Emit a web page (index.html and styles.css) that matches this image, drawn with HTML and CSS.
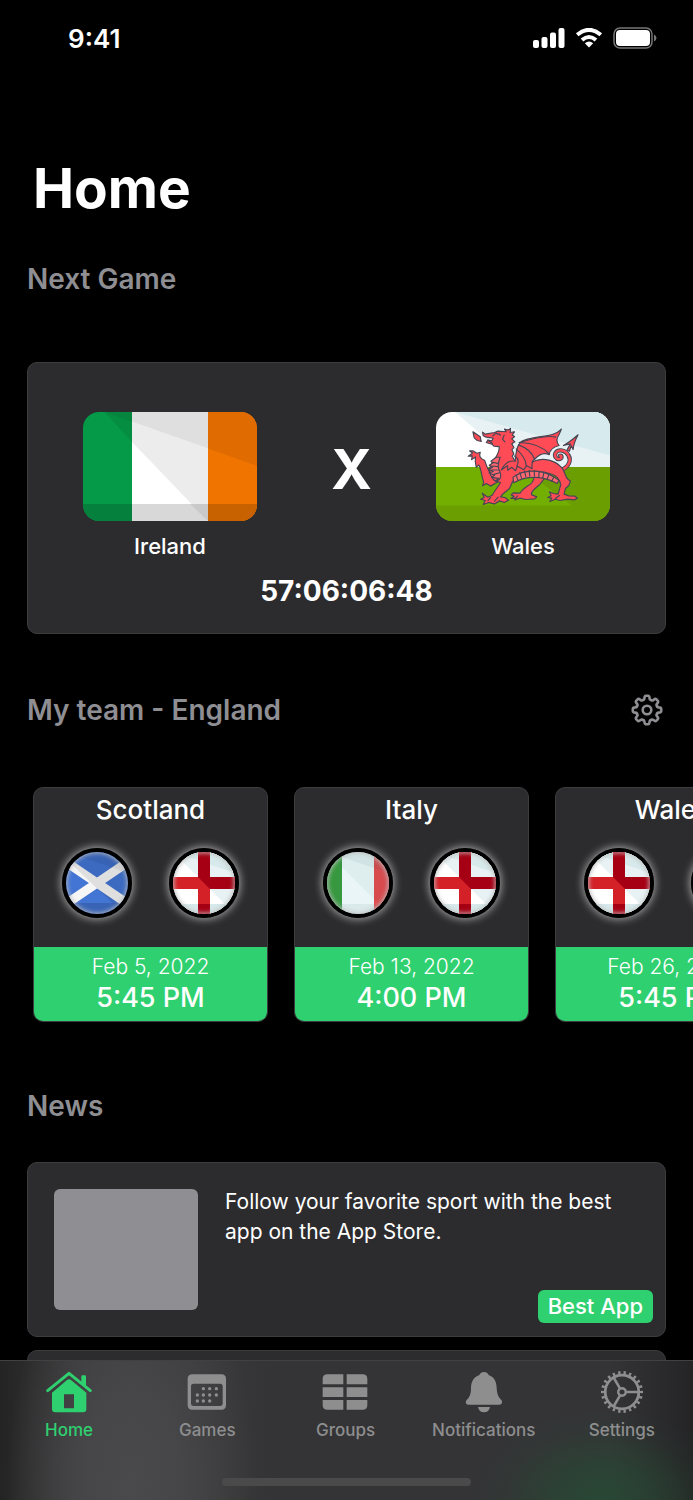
FILE: index.html
```html
<!DOCTYPE html>
<html lang="en">
<head>
<meta charset="utf-8">
<meta name="viewport" content="width=device-width, initial-scale=1">
<title>Home</title>
<link rel="stylesheet" href="styles.css">
</head>
<body>
<svg class="defs" aria-hidden="true">
  <symbol id="flag-england" viewBox="-31 -31 62 62">
    <rect x="-31" y="-31" width="62" height="62" fill="#fff"/>
    <path d="M-31-31L31 31V-31Z" fill="#e8f2f4"/>
    <path d="M-31-31L31-10V-31Z" fill="#d7e9eb"/>
    <path d="M-31 21H31V31H-31Z" fill="#d7e9eb"/>
    <path d="M-6-31H6V-6H31V6H6V31H-6V6H-31V-6H-6Z" fill="#d42027"/>
    <path d="M-6-31H6V-6H31V6H6L-6-6Z" fill="#a50014"/>
    <path d="M-6 21H6V31H-6Z" fill="#a50014"/>
  </symbol>
  <symbol id="flag-scotland" viewBox="-31 -31 62 62">
    <rect x="-31" y="-31" width="62" height="62" fill="#4375d4"/>
    <path d="M-34-23L34 23M-34 23L34-23" stroke="#f6f6f6" stroke-width="9"/>
    <path d="M-31-24L31 35V-31H-31Z" opacity=".09"/>
    <path d="M-31-31L31-10V-31Z" opacity=".06"/>
    <path d="M-31 20H31V31H-31Z" opacity=".14"/>
  </symbol>
  <symbol id="flag-italy" viewBox="-31 -31 62 62">
    <rect x="-31" y="-31" width="62" height="62" fill="#e9f5f6"/>
    <path d="M-31-31H-16V31H-31Z" fill="#37983f"/>
    <path d="M16-31H31V31H16Z" fill="#e24a4e"/>
    <path d="M-31-31L31 31V-31Z" fill="#1b5a5a" opacity=".05"/>
    <path d="M-31-31L31-10V-31Z" fill="#1b5a5a" opacity=".07"/>
    <path d="M-31 21H31V31H-31Z" fill="#1b5a5a" opacity=".07"/>
  </symbol>
</svg>

<div class="screen">
  <header class="status">
    <time class="status-time">9:41</time>
    <div class="status-icons">
      <svg width="32" height="20" viewBox="0 0 32 20" fill="#fff" aria-label="Signal"><rect x="0" y="12" width="6" height="8" rx="2"/><rect x="8.500" y="9" width="6" height="11" rx="2"/><rect x="17" y="4.500" width="6" height="15.500" rx="2"/><rect x="25.500" y="0" width="6" height="20" rx="2"/></svg>
      <svg width="28" height="20" viewBox="0 0 28 20" fill="none" stroke="#fff" stroke-width="4" aria-label="Wi-Fi"><path d="M2.200 6.700Q14-3 25.800 6.700"/><path d="M7 12Q14 6 21 12"/><path d="M9.800 15.300Q14 11.800 18.200 15.300L14 19.500Z" fill="#fff" stroke="none"/></svg>
      <svg width="44" height="22" viewBox="0 0 44 22" aria-label="Battery"><rect x="1" y="1" width="38" height="20" rx="6" fill="none" stroke="#777" stroke-width="1.500"/><rect x="3" y="3" width="34" height="16" rx="4" fill="#fff"/><path d="M41 7.500Q43.500 8.500 43.500 11T41 14.500Z" fill="#777"/></svg>
    </div>
  </header>

  <main class="content">
    <h1 class="title">Home</h1>

    <section>
      <h2 class="heading">Next Game</h2>
      <div class="card next-game">
        <div class="match">
          <figure class="team">
            <svg class="team-flag" viewBox="40 37 522 326" preserveAspectRatio="none" aria-label="Flag of Ireland">
              <path d="M40 37H187V363H40Z" fill="#049a48"/>
              <path d="M187 37H415V363H187Z" fill="#fff"/>
              <path d="M415 37H562V363H415Z" fill="#f07400"/>
              <path d="M105 37L187 127V37Z" fill="#058d42"/>
              <path d="M187 66L415 146V363L187 127Z" fill="#ececec"/>
              <path d="M105 37H187V66Z" fill="#05853e"/>
              <path d="M187 37H415V146L187 66Z" fill="#dfdfdf"/>
              <path d="M415 37H562V198L415 146Z" fill="#e06b00"/>
              <path d="M40 312H187V363H40Z" fill="#05803d"/>
              <path d="M187 312H415V363H187Z" fill="#d8d8d8"/>
              <path d="M362 312H415V363Z" fill="#c9c9c9"/>
              <path d="M415 312H562V363H415Z" fill="#c86100"/>
            </svg>
            <figcaption>Ireland</figcaption>
          </figure>
          <span class="versus">X</span>
          <figure class="team">
            <svg class="team-flag" viewBox="48 37 523 325" preserveAspectRatio="none" aria-label="Flag of Wales">
              <path d="M48 37H571V202H48Z" fill="#fff"/>
              <path d="M105 37L300 202H571V37Z" fill="#e8f2f5"/>
              <path d="M105 37L571 167V37Z" fill="#d7eaed"/>
              <path d="M48 201H571V362H48Z" fill="#73af00"/>
              <path d="M300 201L456 316H48V362H571V201Z" fill="#6b9e00"/>
              <g fill="none" stroke-linecap="round">
                <path d="M424 210C446 202 456 182 446 166C438 150 416 147 408 158C402 168 410 180 420 177C428 174 426 167 421 167" stroke="#464655" stroke-width="13"/>
                <path d="M424 210C446 202 456 182 446 166C438 150 416 147 408 158C402 168 410 180 420 177C428 174 426 167 421 167" stroke="#ff4b55" stroke-width="7"/>
              </g>
              <g fill="#ff4b55" stroke="#464655" stroke-width="3.500" stroke-linejoin="round" stroke-linecap="round">
                <path d="M442 150L452 132L431 137Q450 127 475 105Q462 129 460 149L454 137Q452 145 449 154Z"/>
                <path d="M348 222C338 236 344 242 332 252C318 262 306 268 301 279L280 278L274 284L283 288L273 295L286 294L285 299L300 294L318 298L345 296L351 290L336 284C330 277 347 264 360 253C370 243 374 234 378 226Z"/>
                <path d="M194 181C180 176 177 168 181 157L171 160L160 153L149 153L158 159L145 169L157 168L155 179L167 171L166 184L169 202L176 195C183 201 184 222 191 246L188 257L199 250L212 258L238 243L221 232C207 222 208 211 202 202Z"/>
                <path d="M188 97L196 103L224 98L234 94L259 96L254 88Q267 93 272 86L271 98L284 96L277 105L284 111L276 117L285 126L276 132L282 143L276 149L282 162L277 169L286 184C304 202 324 194 344 183C371 172 406 181 425 202C439 216 433 229 446 239L452 243L447 256L437 265L433 282L447 287L466 288L473 294L464 299L444 297L421 301L407 297L390 304L396 294L384 292L394 287L389 275L401 280L415 282L423 254C420 238 410 226 394 222C360 209 322 213 294 229C278 237 276 250 269 265L248 282L242 290L255 292L266 300L253 307L239 302L224 311L207 307L190 313L196 301L182 297L193 292L187 279L204 291L217 285C225 272 232 262 242 248L222 240C203 219 207 198 223 179C233 165 239 151 238 140L222 139L216 133L199 128L204 121L216 123L220 115L199 112L190 108Z"/>
                <path d="M159 96L181 111L184 125L172 122L163 114Z"/>
                <path d="M286 184C288 155 292 127 314 121C357 105 399 115 425 88L418 104Q405 122 418 137Q392 143 388 164Q365 154 344 179Q334 181 337 206L321 197L312 209L293 199L287 212L276 202L264 211L263 197L244 210C256 188 268 180 286 184Z"/>
                <path d="M298 128Q377 104 408 112M301 128Q360 130 389 163M296 135Q333 148 344 177M289 147Q319 174 319 197M284 168Q302 178 291 199" fill="none"/>
                <path d="M229 172L213 184L219 189L208 196L218 202L206 207L220 214L207 219L224 225L216 232L236 235L226 243Q251 239 238 211Q231 196 241 172Z" fill="#ff6870"/>
                <path d="M279 232C323 199 385 214 417 241L412 250C372 229 324 224 282 248Z" fill="#ff6870"/>
                <path d="M289 225L294 240M300 217L305 234M314 213L318 230M328 211L330 228M343 211L344 228M358 214L357 231M372 218L369 234M387 224L382 238M402 232L395 244M219 187L234 190M216 198L234 200M216 210L235 210M222 223L239 218" fill="none"/>
                <path d="M219 108L228 100L242 106M231 102L239 103M204 121L218 131M253 106L248 118L255 126M212 292L204 301M235 291L224 303M293 287L287 295M419 286L407 295" fill="none"/>
              </g>
            </svg>
            <figcaption>Wales</figcaption>
          </figure>
        </div>
        <p class="countdown">57:06:06:48</p>
      </div>
    </section>

    <section class="my-team">
      <div class="heading-row">
        <h2 class="heading">My team - England</h2>
        <button class="icon-button" type="button" aria-label="Team settings">
          <svg width="32" height="32" viewBox="-16 -16 32 32" fill="none" stroke="#8e8e93" stroke-width="2.600" stroke-linecap="round" stroke-linejoin="round">
            <circle r="4.300"/>
            <path id="tooth" d="M-4.130-9.980Q-2.800-9.800-2.600-11.700Q-2.400-14.200-1.200-14.200H1.200Q2.400-14.200 2.600-11.700Q2.800-9.800 4.130-9.980"/>
            <use href="#tooth" transform="rotate(45)"/><use href="#tooth" transform="rotate(90)"/><use href="#tooth" transform="rotate(135)"/><use href="#tooth" transform="rotate(180)"/><use href="#tooth" transform="rotate(225)"/><use href="#tooth" transform="rotate(270)"/><use href="#tooth" transform="rotate(315)"/>
          </svg>
        </button>
      </div>
      <div class="games">
        <article class="card game">
          <h3 class="game-name">Scotland</h3>
          <div class="game-flags">
            <span class="badge-flag"><svg><use href="#flag-scotland"/></svg></span>
            <span class="badge-flag"><svg><use href="#flag-england"/></svg></span>
          </div>
          <div class="game-when"><span class="game-date">Feb 5, 2022</span><span class="game-time">5:45 PM</span></div>
        </article>
        <article class="card game">
          <h3 class="game-name">Italy</h3>
          <div class="game-flags">
            <span class="badge-flag"><svg><use href="#flag-italy"/></svg></span>
            <span class="badge-flag"><svg><use href="#flag-england"/></svg></span>
          </div>
          <div class="game-when"><span class="game-date">Feb 13, 2022</span><span class="game-time">4:00 PM</span></div>
        </article>
        <article class="card game">
          <h3 class="game-name">Wales</h3>
          <div class="game-flags">
            <span class="badge-flag"><svg><use href="#flag-england"/></svg></span>
            <span class="badge-flag"></span>
          </div>
          <div class="game-when"><span class="game-date">Feb 26, 2022</span><span class="game-time">5:45 PM</span></div>
        </article>
      </div>
    </section>

    <section class="news">
      <h2 class="heading">News</h2>
      <div class="news-list">
        <article class="card story">
          <div class="story-image"></div>
          <div class="story-body">
            <p class="story-text">Follow your favorite sport with the best app on the App Store.</p>
            <span class="tag">Best App</span>
          </div>
        </article>
        <article class="card story"></article>
      </div>
    </section>
  </main>

  <footer class="tabbar">
    <nav class="tabs">
      <a class="tab tab-active" href="#home">
        <svg class="tab-icon" viewBox="141 86 132 132" fill="currentColor">
          <path d="M143 148L207 96L271 148" fill="none" stroke="currentColor" stroke-width="9" stroke-linecap="round" stroke-linejoin="round"/>
          <path d="M244 106Q244 102 248 102H254Q258 102 258 106V140L244 128Z"/>
          <path fill-rule="evenodd" d="M156 154L201 116Q207 111 213 116L259 154V203Q259 213 249 213H166Q156 213 156 203ZM192 159V201H222V159Z"/>
        </svg>
        <span>Home</span>
      </a>
      <a class="tab" href="#games">
        <svg class="tab-icon" viewBox="558 91 132 132" fill="currentColor">
          <path fill-rule="evenodd" d="M580 104H667Q681 104 681 118V196Q681 210 667 210H580Q566 210 566 196V118Q566 104 580 104ZM584 132Q576 132 576 140V191Q576 199 584 199H663Q671 199 671 191V140Q671 132 663 132Z"/>
          <path d="M613 147h.1M632 147h.1M652 147h.1M595 166h.1M613 166h.1M632 166h.1M652 166h.1M595 184h.1M613 184h.1M632 184h.1" stroke="currentColor" stroke-width="10" stroke-linecap="round"/>
        </svg>
        <span>Games</span>
      </a>
      <a class="tab" href="#groups">
        <svg class="tab-icon" viewBox="970 91 132 132" fill="currentColor">
          <path d="M1031 104V134H969V118Q969 104 983 104ZM1041 104V134H1103V118Q1103 104 1089 104ZM969 143H1031V172H969ZM1041 143H1103V172H1041ZM1031 210V181H969V196Q969 210 983 210ZM1041 210V181H1103V196Q1103 210 1089 210Z"/>
        </svg>
        <span>Groups</span>
      </a>
      <a class="tab" href="#notifications">
        <svg class="tab-icon" viewBox="336 90 132 132" fill="currentColor">
          <path d="M388 105Q392 96 402 96T416 105C433 112 439 124 440 143C441 166 447 172 454 180C459 187 455 194 448 194H355C348 194 345 187 350 180C358 171 363 165 363 143C364 124 371 112 388 105Z"/>
          <path d="M384 201H420Q417 217 402 217T384 201Z"/>
        </svg>
        <span>Notifications</span>
      </a>
      <a class="tab" href="#settings">
        <svg class="tab-icon" viewBox="-22 -22 44 44" fill="none" stroke="currentColor">
          <circle r="16.800" stroke-width="2.800"/>
          <circle r="19.400" stroke-width="3.200" pathLength="132" stroke-dasharray="2.600 3.400" stroke-dashoffset="1.300"/>
          <circle r="3.800" stroke-width="2.400"/>
          <path d="M4.500 0H17M-2.200-3.800L-8.500-14.700M-2.200 3.800L-8.500 14.700" stroke-width="2.600"/>
        </svg>
        <span>Settings</span>
      </a>
    </nav>
    <div class="home-indicator"></div>
  </footer>
</div>
</body>
</html>
```
FILE: styles.css
```css
* {
  box-sizing: border-box;
}

body,
h1,
h2,
h3,
p,
figure {
  margin: 0;
}

body {
  background: #000;
  color: #fff;
  font-family: Inter, "Liberation Sans", sans-serif;
}

svg {
  display: block;
}

.defs {
  position: absolute;
  width: 0;
  height: 0;
}

.screen {
  display: flex;
  flex-direction: column;
  height: 100vh;
}

.status {
  display: flex;
  flex: none;
  align-items: center;
  justify-content: space-between;
  height: 76px;
  padding: 0 36px 0 68px;
}

.status-time {
  font-size: 26px;
  font-weight: 600;
}

.status-icons {
  display: flex;
  align-items: center;
  gap: 10px;
}

.content {
  flex: 1;
  min-height: 0;
  overflow: hidden;
  padding: 78px 27px 0;
}

.title {
  padding-left: 6px;
  font-size: 55px;
  font-weight: 700;
  line-height: 68px;
}

.heading {
  color: #8e8e93;
  font-size: 28px;
  font-weight: 600;
  line-height: 34px;
}

.title + section {
  margin-top: 40px;
}

.card {
  background: #2c2c2e;
  border: 1px solid #3d3d3f;
  border-radius: 10px;
}

.next-game {
  margin-top: 66px;
  padding: 49px 55px 25px;
}

.match {
  display: flex;
  justify-content: space-between;
}

.team-flag {
  width: 174px;
  height: 109px;
  border-radius: 16px;
}

.team figcaption {
  margin-top: 12px;
  font-size: 22px;
  font-weight: 500;
  line-height: 26px;
  text-align: center;
}

.versus {
  padding-left: 10px;
  font-size: 55px;
  font-weight: 700;
  line-height: 114px;
}

.countdown {
  margin-top: 15px;
  font-size: 28px;
  font-weight: 700;
  line-height: 34px;
  text-align: center;
}

.my-team {
  margin-top: 59px;
}

.heading-row {
  display: flex;
  align-items: center;
  justify-content: space-between;
  padding-right: 3px;
}

.icon-button {
  padding: 0;
  border: 0;
  background: none;
}

.games {
  display: flex;
  gap: 26px;
  margin: 60px -27px 0 6px;
  overflow: hidden;
}

.game {
  display: flex;
  flex: none;
  flex-direction: column;
  width: 235px;
  overflow: hidden;
}

.game-name {
  padding-top: 6px;
  font-size: 26px;
  font-weight: 500;
  line-height: 32px;
  text-align: center;
}

.game-flags {
  display: flex;
  justify-content: center;
  gap: 37px;
  padding: 22px 0 29px;
}

.badge-flag {
  position: relative;
  width: 70px;
  height: 70px;
  overflow: hidden;
  border: 4px solid #000;
  border-radius: 50%;
  box-shadow: 0 0 9px 1px rgba(255, 255, 255, 0.6);
}

.badge-flag svg {
  width: 62px;
  height: 62px;
}

.badge-flag::after {
  position: absolute;
  inset: 0;
  border-radius: 50%;
  box-shadow: inset 0 0 4px 1px rgba(190, 190, 190, 0.9);
  content: "";
}

.game-when {
  display: flex;
  flex-direction: column;
  align-items: center;
  margin: 0 -1px -1px;
  padding: 6px 0 7px;
  background: #2fd070;
}

.game-date {
  font-size: 21px;
  font-weight: 300;
  line-height: 28px;
}

.game-time {
  font-size: 27px;
  font-weight: 500;
  line-height: 34px;
}

.news {
  margin-top: 67px;
}

.news-list {
  display: grid;
  gap: 13px;
  margin-top: 39px;
}

.story {
  display: flex;
  gap: 27px;
  min-height: 175px;
  padding: 24px 12px 13px 26px;
}

.story-image {
  width: 144px;
  height: 121px;
  margin-top: 2px;
  border-radius: 6px;
  background: #8e8e93;
}

.story-body {
  display: flex;
  flex: 1;
  flex-direction: column;
  align-items: flex-end;
  justify-content: space-between;
}

.story-text {
  align-self: stretch;
  font-size: 21px;
  line-height: 30px;
}

.tag {
  padding: 0 10px;
  border-radius: 6px;
  background: #2fd070;
  font-size: 22px;
  font-weight: 500;
  line-height: 33px;
}

.tabbar {
  display: flex;
  flex: none;
  flex-direction: column;
  align-items: center;
  justify-content: space-between;
  height: 140px;
  padding: 9px 0 14px;
  border-top: 1px solid #414143;
  background:
    radial-gradient(ellipse 130px 90px at 87% 100%, rgba(38, 75, 52, 0.85), rgba(38, 75, 52, 0.55) 40%, rgba(38, 75, 52, 0.15) 75%, rgba(38, 75, 52, 0)),
    linear-gradient(90deg, rgba(0, 0, 0, 0) 88%, rgba(0, 0, 0, 0.3)),
    radial-gradient(ellipse 125px 260px at 19% 90%, #4a4a4c, #464648 40%, rgba(60, 60, 62, 0)),
    linear-gradient(90deg, #242424, #39393a 12%, #39393a 28%, #343436 40%, #343436);
}

.tabs {
  display: grid;
  grid-template-columns: repeat(5, 1fr);
  width: 100%;
  padding-right: 2px;
}

.tab {
  display: flex;
  flex-direction: column;
  align-items: center;
  gap: 6px;
  color: #8e8e8f;
  font-size: 17px;
  font-weight: 500;
  line-height: 20px;
  text-decoration: none;
}

.tab-active {
  color: #2fd070;
}

.tab-icon {
  width: 44px;
  height: 44px;
  overflow: visible;
}

.home-indicator {
  width: 36%;
  height: 8px;
  border-radius: 4px;
  background: #4a4a4a;
}
```
